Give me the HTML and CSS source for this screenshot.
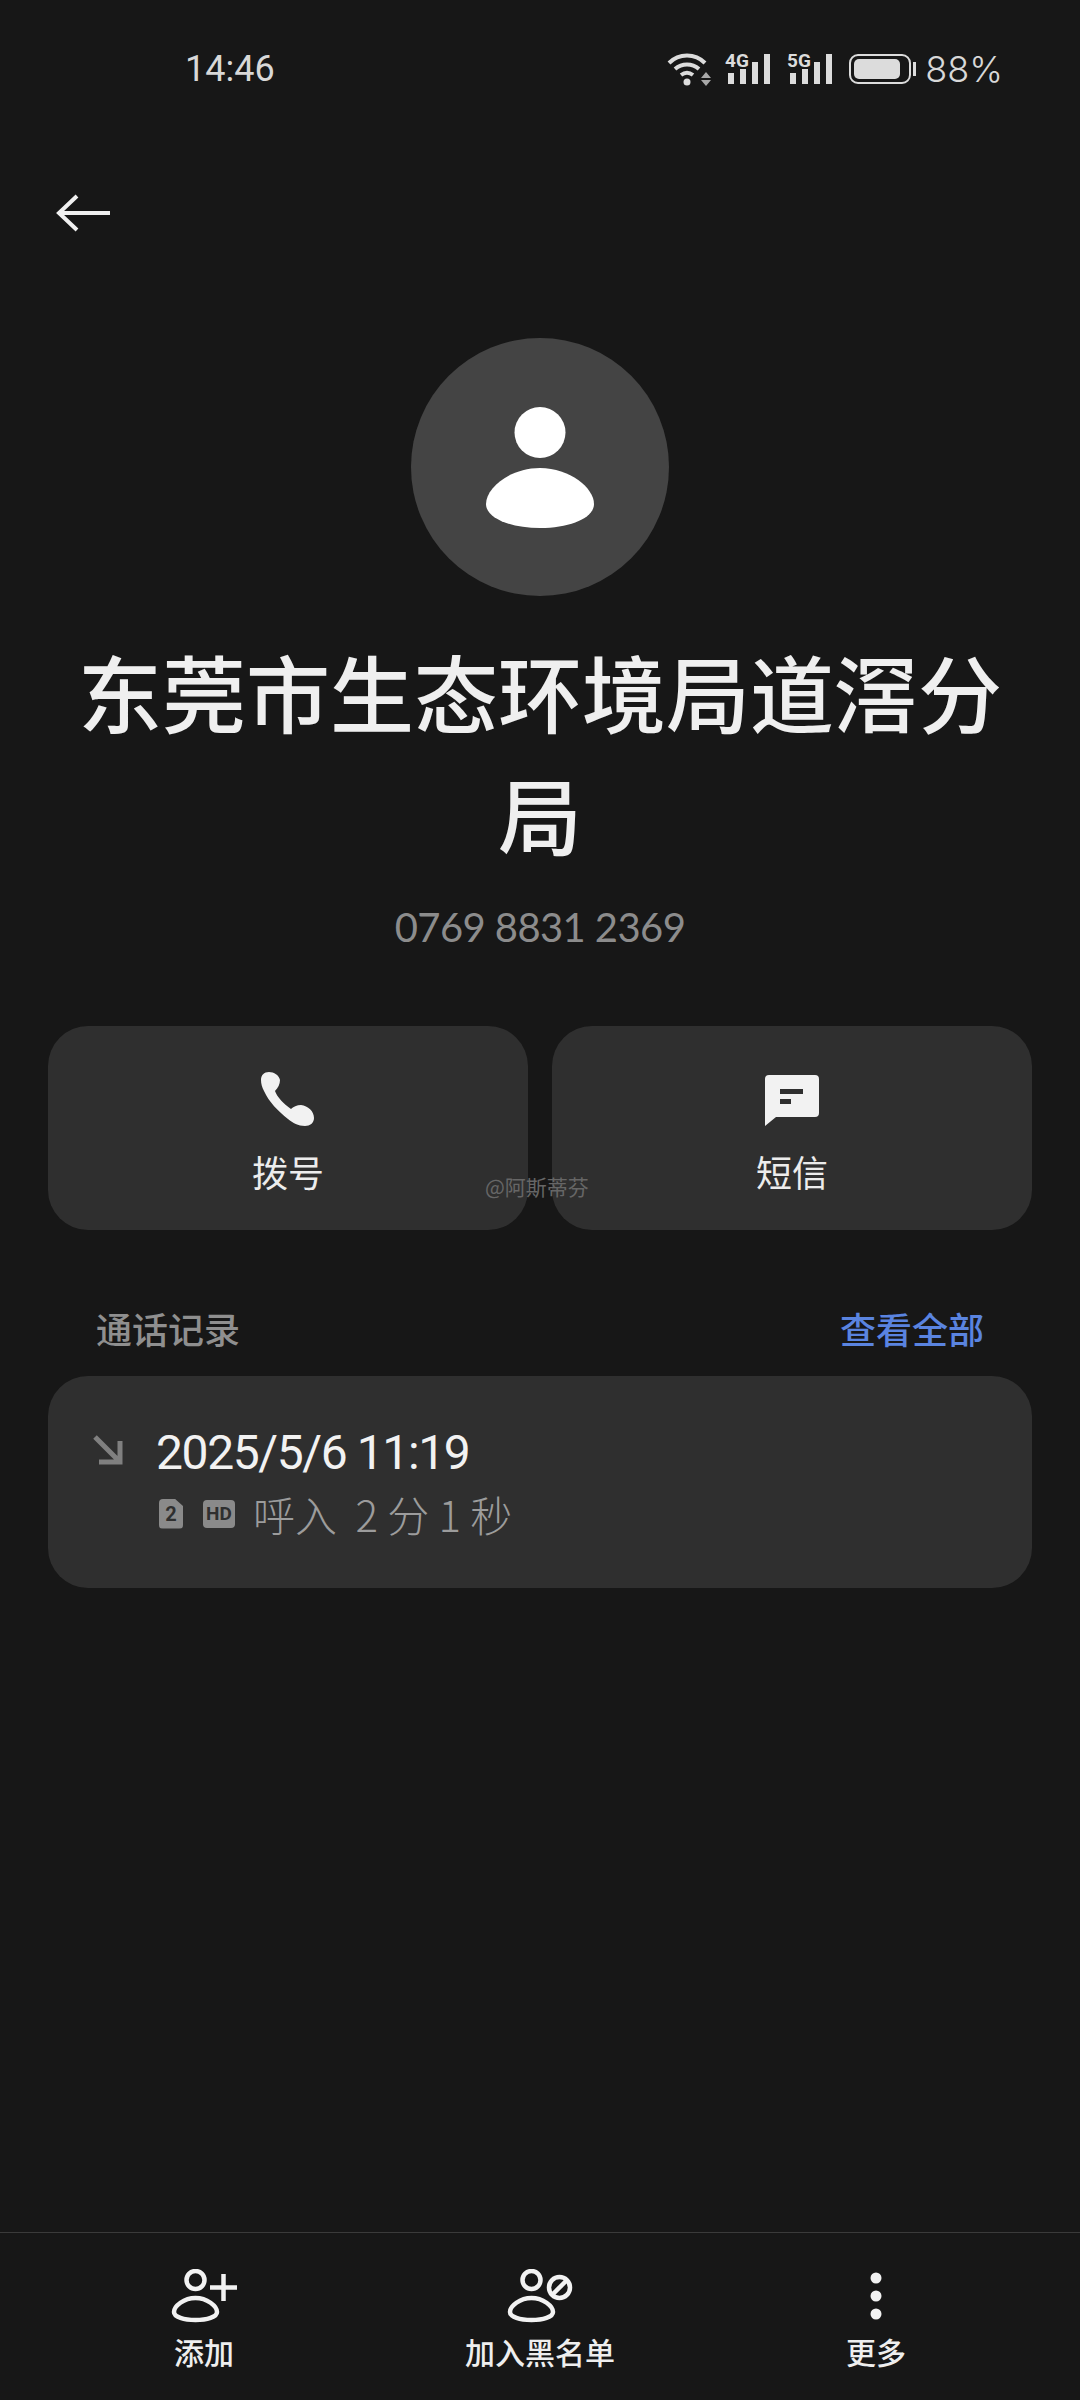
FILE: index.html
```html
<!DOCTYPE html>
<html lang="zh-CN">
<head>
    <meta charset="UTF-8">
    <title>通话详情</title>
    <link rel="stylesheet" href="styles.css">
</head>
<body>
    <div class="status-bar">
        <span class="clock">14:46</span>
        <div class="status-icons">
            <svg class="wifi" width="46" height="34" viewBox="0 0 46 34"><g fill="none" stroke="#dcdcdc" stroke-width="4"><path d="M2 11C12 1 28 1 38 11"/><path d="M8 17c7-6 17-6 24 0"/><path d="M14 23c4-3 8-3 12 0"/></g><circle cx="20" cy="30" r="3.500" fill="#dcdcdc"/><path d="M39 20l5 6H34zM34 28h10l-5 6z" fill="#a8a8a8"/></svg>
            <svg class="signal" width="46" height="40" viewBox="0 -6 46 40"><g fill="#dcdcdc"><rect x="3" y="21" width="6" height="11"/><rect x="15" y="17" width="6" height="15"/><rect x="27" y="10" width="6" height="22"/><rect x="39" y="2" width="6" height="30"/></g><text x="0" y="15" class="net-label">4G</text></svg>
            <svg class="signal" width="46" height="40" viewBox="0 -6 46 40"><g fill="#dcdcdc"><rect x="3" y="21" width="6" height="11"/><rect x="15" y="17" width="6" height="15"/><rect x="27" y="10" width="6" height="22"/><rect x="39" y="2" width="6" height="30"/></g><text x="0" y="15" class="net-label">5G</text></svg>
            <div class="battery"><div class="battery-level"></div></div>
            <span class="percent">88%</span>
        </div>
    </div>

    <div class="back-row">
        <svg width="56" height="40" viewBox="0 0 56 40"><path d="M54 20H3M21 3 3 20l18 17" fill="none" stroke="#f0f0f0" stroke-width="4"/></svg>
    </div>

    <div class="profile">
        <div class="avatar">
            <svg width="108" height="121" viewBox="0 0 108 121"><circle cx="54" cy="25.500" r="25.500" fill="#fff"/><path d="M54 61C84 61 108 81 108 97C108 111 84 121 54 121C24 121 0 111 0 97C0 81 24 61 54 61z" fill="#fff"/></svg>
        </div>
        <h1 class="name">东莞市生态环境局道滘分局</h1>
        <div class="number">0769 8831 2369</div>
    </div>

    <div class="actions">
        <div class="action-card">
            <svg width="56" height="56" viewBox="0 0 56 56"><path fill="#f2f2f2" d="M1 9C1 4 4 1 9 1C14 1 19 4 20 9C20 13 18 17 15 20C17 26 24 33 31 38C33 36 37 34 41 34C48 35 54 40 54 47C54 52 50 55 45 55C38 55 33 52 28 48C18 40 9 31 4 20C2 16 1 13 1 9z"/></svg>
            <span>拨号</span>
        </div>
        <div class="action-card">
            <svg width="56" height="56" viewBox="0 0 56 56"><path fill="#f2f2f2" d="M5 4h46a4 4 0 0 1 4 4v34a4 4 0 0 1-4 4H12L1 55V8a4 4 0 0 1 4-4z"/><rect x="16" y="18" width="23" height="5" fill="#2f2f2f"/><rect x="16" y="28" width="11" height="5" fill="#2f2f2f"/></svg>
            <span>短信</span>
        </div>
        <span class="watermark">@阿斯蒂芬</span>
    </div>

    <div class="section-head">
        <span class="section-title">通话记录</span>
        <span class="see-all">查看全部</span>
    </div>

    <div class="call-card">
        <svg class="call-arrow" width="32" height="32" viewBox="0 0 32 32"><path d="M3 3l25 25M28 7v21H7" fill="none" stroke="#808080" stroke-width="5"/></svg>
        <div class="call-info">
            <div class="call-time">2025/5/6 11:19</div>
            <div class="call-meta">
                <span class="sim-badge">2</span>
                <span class="hd-badge">HD</span>
                <span class="call-desc">呼入&nbsp; 2 分 1 秒</span>
            </div>
        </div>
    </div>

    <div class="spacer"></div>

    <div class="bottom-bar">
        <div class="bottom-item">
            <svg width="66" height="54" viewBox="0 0 66 54"><g fill="none" stroke="#f2f2f2" stroke-width="4.500"><circle cx="24.500" cy="11" r="9"/><path d="M24.500 29C36 29 46 37 46 43C46 48 36 51 24.500 51C13 51 3 48 3 43C3 37 13 29 24.500 29z"/><path d="M39 18.500h27M52.500 5v27"/></g></svg>
            <span>添加</span>
        </div>
        <div class="bottom-item">
            <svg width="66" height="54" viewBox="0 0 66 54"><g fill="none" stroke="#f2f2f2" stroke-width="4.500"><circle cx="24.500" cy="11" r="9"/><path d="M24.500 29C36 29 46 37 46 43C46 48 36 51 24.500 51C13 51 3 48 3 43C3 37 13 29 24.500 29z"/><circle cx="52.500" cy="18.500" r="10.500"/><path d="M46 25l13-13"/></g></svg>
            <span>加入黑名单</span>
        </div>
        <div class="bottom-item">
            <svg width="66" height="54" viewBox="0 0 66 54"><g fill="#f2f2f2"><circle cx="33" cy="9" r="5.500"/><circle cx="33" cy="27" r="5.500"/><circle cx="33" cy="45" r="5.500"/></g></svg>
            <span>更多</span>
        </div>
    </div>
</body>
</html>
```

FILE: styles.css
```css
html, body {
    margin: 0;
    height: 100%;
}
body {
    display: flex;
    flex-direction: column;
    height: 2400px;
    background-color: #171717;
    color: #f2f2f2;
    font-family: "Noto Sans CJK SC", "Noto Sans", sans-serif;
}
.status-bar {
    display: flex;
    justify-content: space-between;
    align-items: center;
    height: 48px;
    padding: 45px 77px 0 185px;
    color: #d8d8d8;
    font-family: Roboto, sans-serif;
    font-size: 36px;
}
.status-icons {
    display: flex;
    align-items: center;
}
.signal {
    margin-top: -6px;
    margin-left: 12px;
}
.signal + .signal {
    margin-left: 16px;
}
.net-label {
    font-family: Roboto, sans-serif;
    font-size: 19px;
    font-weight: 700;
    fill: #dcdcdc;
}
.battery {
    position: relative;
    box-sizing: border-box;
    width: 62px;
    height: 30px;
    margin-left: 16px;
    padding: 3px;
    border: 2px solid #dcdcdc;
    border-radius: 9px;
}
.battery::after {
    content: "";
    position: absolute;
    right: -7px;
    top: 6px;
    width: 3px;
    height: 14px;
    background-color: #dcdcdc;
}
.battery-level {
    width: 88%;
    height: 100%;
    background-color: #dcdcdc;
    border-radius: 5px;
}
.percent {
    margin-left: 14px;
    font-family: Inter, sans-serif;
    font-size: 36px;
    font-weight: 300;
}
.back-row {
    height: 40px;
    padding: 100px 0 0 56px;
}
.profile {
    display: flex;
    flex-direction: column;
    align-items: center;
}
.avatar {
    display: flex;
    align-items: center;
    justify-content: center;
    width: 258px;
    height: 258px;
    margin-top: 105px;
    background-color: #444;
    border-radius: 50%;
}
.name {
    width: 940px;
    margin: 34px 0 0;
    font-size: 84px;
    font-weight: 500;
    line-height: 122px;
    text-align: center;
    color: #efefef;
}
.number {
    margin-top: 29px;
    font-family: Lato, sans-serif;
    font-size: 40px;
    letter-spacing: -0.600px;
    color: #8c8c8c;
}
.actions {
    position: relative;
    display: flex;
    gap: 24px;
    margin: 75px 48px 0;
}
.action-card {
    flex: 1;
    display: flex;
    flex-direction: column;
    align-items: center;
    height: 204px;
    padding-top: 45px;
    box-sizing: border-box;
    background-color: #2f2f2f;
    border-radius: 40px;
    font-size: 36px;
    color: #ececec;
}
.action-card span {
    margin-top: 18px;
}
.watermark {
    position: absolute;
    left: 437px;
    top: 145px;
    font-size: 21px;
    color: #666;
}
.section-head {
    display: flex;
    justify-content: space-between;
    align-items: center;
    margin: 72px 96px 0;
    font-size: 36px;
    font-weight: 500;
}
.section-title {
    color: #8f8f8f;
}
.see-all {
    color: #5a84e0;
}
.call-card {
    display: flex;
    height: 212px;
    box-sizing: border-box;
    margin: 22px 48px 0;
    padding: 56px 44px 0;
    background-color: #2f2f2f;
    border-radius: 40px;
}
.call-arrow {
    margin-top: 2px;
    margin-right: 32px;
}
.call-info {
    margin-top: -9px;
}
.call-time {
    font-family: Roboto, sans-serif;
    font-size: 48px;
    line-height: 60px;
    letter-spacing: -1.400px;
    color: #f2f2f2;
}
.call-meta {
    display: flex;
    align-items: center;
    margin-left: 3px;
    color: #9c9c9c;
}
.sim-badge {
    display: flex;
    align-items: center;
    justify-content: center;
    width: 24px;
    height: 30px;
    background-color: #8a8a8a;
    border-radius: 4px;
    clip-path: polygon(0 0, 65% 0, 100% 25%, 100% 100%, 0 100%);
    font-family: Roboto, sans-serif;
    font-size: 20px;
    font-weight: 700;
    color: #2f2f2f;
}
.hd-badge {
    display: flex;
    align-items: center;
    justify-content: center;
    width: 32px;
    height: 28px;
    margin-left: 20px;
    background-color: #8a8a8a;
    border-radius: 4px;
    font-family: Roboto, sans-serif;
    font-size: 19px;
    font-weight: 700;
    color: #2f2f2f;
}
.call-desc {
    margin-left: 18px;
    font-size: 42px;
    font-weight: 300;
}
.spacer {
    flex: 1;
}
.bottom-bar {
    display: flex;
    justify-content: center;
    height: 168px;
    padding: 36px 0 0;
    box-sizing: border-box;
    border-top: 1px solid #3a3a3a;
}
.bottom-item {
    display: flex;
    flex-direction: column;
    align-items: center;
    width: 336px;
    font-size: 30px;
    font-weight: 500;
    color: #eee;
}
.bottom-item span {
    margin-top: 6px;
}
```
